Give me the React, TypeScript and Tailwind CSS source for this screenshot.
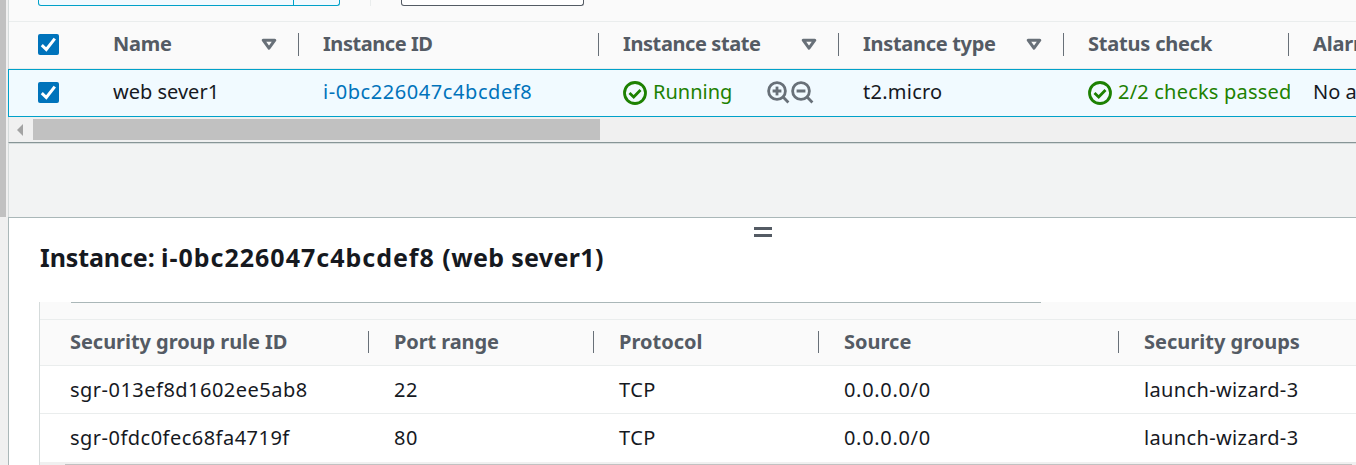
import type { ReactNode } from 'react';

type Column = { label: string; width: string; spacing: string; sortable?: boolean };

const instanceColumns: Column[] = [
  { label: 'Name', width: 'w-[210px]', spacing: 'tracking-[-0.25px]', sortable: true },
  { label: 'Instance ID', width: 'w-[300px]', spacing: 'tracking-[-0.45px]' },
  { label: 'Instance state', width: 'w-[240px]', spacing: 'tracking-[-0.4px]', sortable: true },
  { label: 'Instance type', width: 'w-[225px]', spacing: 'tracking-[-0.3px]', sortable: true },
  { label: 'Status check', width: 'w-[225px]', spacing: 'tracking-[-0.2px]' },
  { label: 'Alarm status', width: 'w-[225px]', spacing: 'tracking-[-0.2px]' },
];

const ruleColumns: Column[] = [
  { label: 'Security group rule ID', width: 'w-[324px]', spacing: 'tracking-[-0.05px]' },
  { label: 'Port range', width: 'w-[225px]', spacing: 'tracking-[-0.1px]' },
  { label: 'Protocol', width: 'w-[225px]', spacing: 'tracking-normal' },
  { label: 'Source', width: 'w-[300px]', spacing: 'tracking-normal' },
  { label: 'Security groups', width: 'w-[238px]', spacing: 'tracking-normal' },
];

const ruleSpacing = [
  'tracking-[0.48px]',
  'tracking-[0.5px]',
  'tracking-[0.5px]',
  'tracking-[0.68px]',
  'tracking-[0.36px]',
];

const rules = [
  ['sgr-013ef8d1602ee5ab8', '22', 'TCP', '0.0.0.0/0', 'launch-wizard-3'],
  ['sgr-0fdc0fec68fa4719f', '80', 'TCP', '0.0.0.0/0', 'launch-wizard-3'],
];

function Checkbox() {
  return (
    <span className="mb-0.5 flex size-[21px] shrink-0 items-center justify-center rounded-[2px] bg-[#0073bb]">
      <svg width="21" height="21" viewBox="0 0 21 21" fill="none" stroke="#fff" strokeWidth="3">
        <path d="M3.8 11.2 8.3 15.5 16.8 4.6" />
      </svg>
    </span>
  );
}

function SortIcon() {
  return (
    <svg width="16" height="13" viewBox="0 0 16 13" fill="none" stroke="#687078" strokeWidth="3" strokeLinejoin="round">
      <path d="M2.2 2.2h11.6L8 10.2Z" />
    </svg>
  );
}

function StatusIcon() {
  return (
    <svg className="shrink-0" width="24" height="24" viewBox="0 0 24 24" fill="none" stroke="#1d8102" strokeWidth="2.8">
      <circle cx="12" cy="12" r="10.5" />
      <path d="m6.5 12 4.2 4 6.8-7" />
    </svg>
  );
}

function ZoomIcon({ plus }: { plus?: boolean }) {
  return (
    <svg width="24" height="24" viewBox="0 0 24 24" fill="none" stroke="#687078" strokeWidth="2.8">
      <circle cx="10" cy="10" r="8.4" />
      <path d="m15.6 15.6 5.8 5.8M5.6 10h8.8" />
      {plus && <path d="M10 5.6v8.8" />}
    </svg>
  );
}

function Cell({ width, children }: { width: string; children: ReactNode }) {
  return <div className={`flex h-full shrink-0 items-center overflow-hidden ${width}`}>{children}</div>;
}

export default function App() {
  return (
    <div className="flex h-[465px] w-[1356px] overflow-hidden bg-[#f2f3f3] font-['Noto_Sans',sans-serif] text-[20px] leading-[30px] whitespace-nowrap text-[#16191f]">
      <div className="w-2 shrink-0 bg-[#f0f0f0]">
        <div className="h-[217px] w-1.5 bg-[#c1c1c1]" />
      </div>

      <div className="flex w-[1348px] flex-col">
        <section className="flex h-[143px] shrink-0 flex-col border-b border-l border-b-[#879596] border-l-[#d5dbdb] bg-[#fafafa]">
          <div className="flex h-[22px] shrink-0 border-b border-[#eaeded] pl-[29px]">
            <div className="flex h-1.5 w-[302px] rounded-b-[3px] border border-t-0 border-[#00a1c9] bg-[#f1faff]">
              <div className="w-[255px] border-r border-[#00a1c9]" />
            </div>
            <div className="ml-[30px] h-1.5 w-px bg-[#eaeded]" />
            <div className="ml-[30px] h-1.5 w-[183px] rounded-b-[3px] border border-t-0 border-[#545b64] bg-white" />
          </div>

          <div className="flex h-[47px] shrink-0 items-center overflow-hidden border-b border-[#eaeded] pl-[29px] font-bold text-[#545b64]">
            <Checkbox />
            <div className="mb-0.5 ml-[29px] h-[23px] w-px bg-[#eaeded]" />
            <div className="mb-0.5 flex pl-[25px]">
              {instanceColumns.map((c) => (
                <div key={c.label} className={`flex h-[30px] shrink-0 items-center ${c.width}`}>
                  <span className={`grow ${c.spacing}`}>{c.label}</span>
                  {c.sortable && <SortIcon />}
                  <span className="mr-6 ml-[21px] h-[23px] w-px bg-[#687078]" />
                </div>
              ))}
            </div>
          </div>

          <div className="-ml-px flex h-12 w-[1400px] shrink-0 items-center border border-[#00a1c9] bg-[#f1faff] pl-[29px]">
            <Checkbox />
            <div className="ml-[54px] flex h-full">
              <Cell width="w-[210px]">
                <span className="pb-0.5">web sever1</span>
              </Cell>
              <Cell width="w-[300px]">
                <span className="pb-0.5 tracking-[0.57px] text-[#0073bb]">i-0bc226047c4bcdef8</span>
              </Cell>
              <Cell width="w-[240px]">
                <StatusIcon />
                <span className="ml-1.5 w-[114px] pb-0.5 text-[#1d8102]">Running</span>
                <ZoomIcon plus />
                <ZoomIcon />
              </Cell>
              <Cell width="w-[225px]">
                <span className="pb-0.5 tracking-[0.25px]">t2.micro</span>
              </Cell>
              <Cell width="w-[202px]">
                <StatusIcon />
                <span className="ml-1.5 pb-0.5 tracking-[0.2px] text-[#1d8102]">2/2 checks passed</span>
              </Cell>
              <Cell width="w-[225px]">
                <span className="pb-0.5 pl-[23px]">No alarms</span>
              </Cell>
            </div>
          </div>

          <div className="flex h-[25px] items-center bg-[#f0f0f0] pl-2">
            <svg width="6" height="12" viewBox="0 0 6 12" fill="#a3a3a3">
              <path d="M6 0v12L0 6Z" />
            </svg>
            <div className="ml-[10px] h-[21px] w-[567px] bg-[#c1c1c1]" />
          </div>
        </section>

        <div className="h-[74px] shrink-0 border-t border-l border-t-[#d5dbdb] border-l-[#d5dbdb]" />

        <section className="h-[248px] shrink-0 border-t border-l border-[#aab7b8] bg-white">
          <div className="flex h-[84px] flex-col pl-[31px]">
            <div className="ml-[714px] flex h-5 w-[18px] flex-col gap-1 pt-[9px]">
              <div className="h-[3px] shrink-0 bg-[#545b64]" />
              <div className="h-[3px] shrink-0 bg-[#545b64]" />
            </div>
            <h1 className="text-[25px] leading-[38px] font-bold">
              <span className="tracking-[-0.1px]">Instance: </span>
              <span className="tracking-[1px]">i-0bc226047c4bcdef8 </span>
              <span className="tracking-[0.35px]">(web sever1)</span>
            </h1>
          </div>

          <div className="ml-[30px] border-l border-[#d5dbdb]">
            <div className="h-[18px] border-b border-[#eaeded] bg-[#fafafa] pl-[31px]">
              <div className="h-px w-[970px] bg-[#aab7b8]" />
            </div>
            <div className="flex h-[46px] items-center overflow-hidden border-b border-[#eaeded] bg-[#fafafa] pb-0.5 pl-[30px] font-bold text-[#545b64]">
              {ruleColumns.map((c, i) => (
                <div key={c.label} className={`flex shrink-0 items-center ${c.width}`}>
                  {i > 0 && <span className="mr-[25px] -ml-[26px] h-[22px] w-px shrink-0 bg-[#687078]" />}
                  <span className={c.spacing}>{c.label}</span>
                </div>
              ))}
            </div>
            {rules.map((r, n) => (
              <div
                key={r[0]}
                className={`flex h-12 items-center overflow-hidden pl-[30px] ${n === 0 ? 'border-b border-[#eaeded]' : ''}`}
              >
                {r.map((text, i) => (
                  <span key={i} className={`shrink-0 ${ruleColumns[i].width} ${ruleSpacing[i]}`}>
                    {text}
                  </span>
                ))}
              </div>
            ))}
            <div className="flex h-[3px] items-end bg-[#f0f0f0] pl-[25px]">
              <div className="h-px w-[1287px] bg-[#c1c1c1]" />
            </div>
          </div>
        </section>
      </div>
    </div>
  );
}
